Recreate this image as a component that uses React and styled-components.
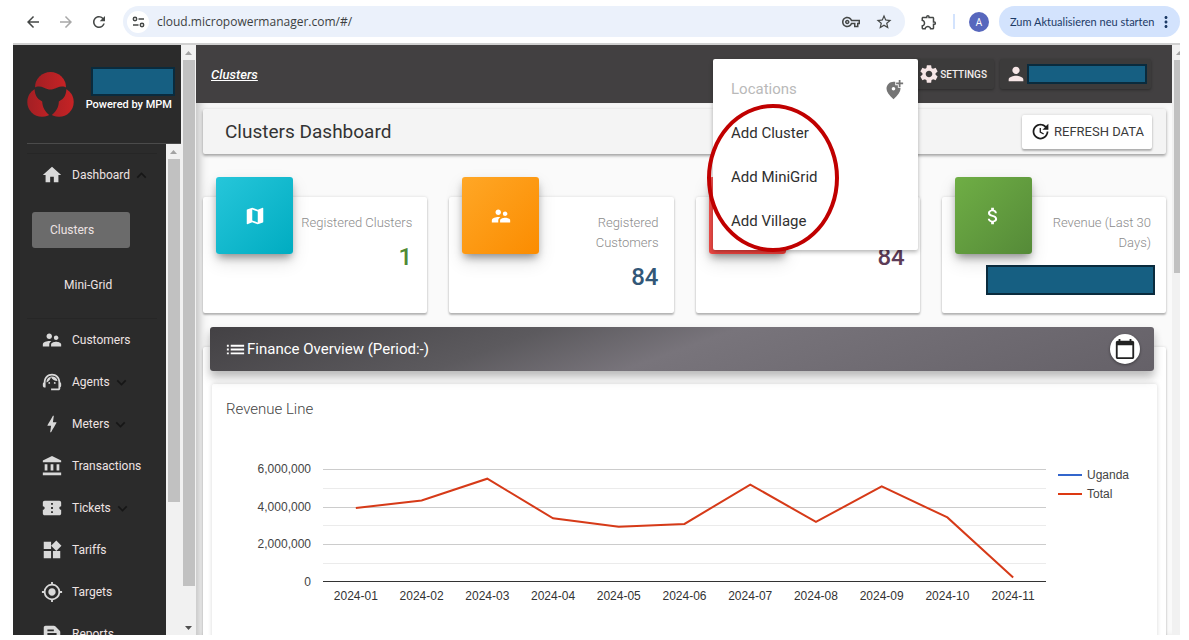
import React from "react";
import styled, { createGlobalStyle, css } from "styled-components";
import {
  MdArrowBack, MdArrowForward, MdRefresh, MdOutlineVpnKey, MdStarBorder, MdOutlineExtension,
  MdMoreVert, MdHome, MdSupervisorAccount, MdSupportAgent, MdBolt, MdAccountBalance,
  MdConfirmationNumber, MdWidgets, MdMyLocation, MdTextSnippet, MdMap, MdAttachMoney, MdList,
  MdCalendarToday, MdUpdate, MdSettings, MdPerson, MdAddLocationAlt,
  MdKeyboardArrowDown, MdKeyboardArrowUp,
} from "react-icons/md";

const GlobalStyle = createGlobalStyle`
  *, *::before, *::after { box-sizing: border-box; }
  body { margin: 0; background: #fff; overflow: hidden; font-family: Roboto, sans-serif; }
  button { font: inherit; color: inherit; border: 0; padding: 0; background: none; cursor: pointer; }
  a { color: inherit; text-decoration: none; }
  h1, h2, h3, p, ul { margin: 0; padding: 0; font-weight: 400; }
  ul { list-style: none; }
  svg { display: block; flex: none; }
`;

/* ---------- window ---------- */
const Window = styled.div`
  height: 100vh;
  padding: 0 9px 5px 13px;
  display: flex;
  flex-direction: column;
`;

const BrowserBar = styled.header`
  flex: none;
  height: 45px;
  padding: 0 0 0 11px;
  display: flex;
  align-items: center;
  border-bottom: 2px solid #d0d0d0;
  font-family: "Open Sans", sans-serif;
  color: #444746;
`;

const BrowserButton = styled.button`
  width: 33px;
  height: 30px;
  display: flex;
  align-items: center;
  justify-content: ${(p) => p.$align || "flex-start"};
  color: ${(p) => (p.$dim ? "#a8a8a8" : "inherit")};
`;

const NavButtons = styled.nav`
  display: flex;
  flex: none;
`;

const AddressBar = styled.div`
  flex: 1;
  height: 31px;
  padding: 0 5px 0 4px;
  display: flex;
  align-items: center;
  border-radius: 16px;
  background: #ebf1fb;
`;

const SiteInfo = styled.button`
  width: 22px;
  height: 22px;
  flex: none;
  display: grid;
  place-items: center;
  border-radius: 50%;
  background: #fff;
`;

const UrlInput = styled.input`
  flex: 1;
  min-width: 0;
  padding: 0 8px;
  border: 0;
  outline: 0;
  background: none;
  font: 12px "Open Sans", sans-serif;
  color: #3c3f42;
`;

const BarDivider = styled.span`
  width: 2px;
  height: 15px;
  margin: 0 14px 0 15px;
  background: #d3e3fd;
`;

const Avatar = styled.button`
  width: 20px;
  height: 20px;
  flex: none;
  border-radius: 50%;
  background: #5767bd;
  color: #fff;
  font-size: 10px;
`;

const UpdateButton = styled.button`
  flex: none;
  height: 31px;
  width: 181px;
  margin-left: 10px;
  padding: 0 5px 0 11px;
  display: flex;
  align-items: center;
  justify-content: space-between;
  border-radius: 16px;
  background: #d3e3fd;
  color: #1c3a66;
  font-family: Lato, sans-serif;
  font-size: 11px;
  white-space: nowrap;
`;

/* ---------- scroll bars ---------- */
const Track = styled.div`
  flex: none;
  width: ${(p) => p.$width}px;
  overflow: hidden;
  display: flex;
  flex-direction: column;
  align-items: flex-start;
  background: #f1f1f1;
`;

const TrackButton = styled.span`
  flex: none;
  width: 15px;
  height: 15px;
  display: grid;
  place-items: center;
  color: ${(p) => p.$color};
`;

const Rail = styled.div`
  flex: 1;
  width: 100%;
  padding-left: 2px;
`;

const Thumb = styled.div`
  width: 12px;
  height: ${(p) => p.$size}%;
  background: #c1c1c1;
`;

function ScrollBar({ width = 15, size, down = true }) {
  return (
    <Track $width={width} aria-hidden="true">
      <TrackButton $color="#a3a3a3">
        <svg width="7" height="4" viewBox="0 0 7 4"><path d="M0 4 3.5 0 7 4z" fill="currentColor" /></svg>
      </TrackButton>
      <Rail><Thumb $size={size} /></Rail>
      {down && (
        <TrackButton $color="#505050">
          <svg width="7" height="4" viewBox="0 0 7 4"><path d="M0 0 3.5 4 7 0z" fill="currentColor" /></svg>
        </TrackButton>
      )}
    </Track>
  );
}

/* ---------- application shell ---------- */
const Shell = styled.div`
  flex: 1;
  min-height: 0;
  display: flex;
`;

const Sidebar = styled.aside`
  flex: none;
  width: 168px;
  display: flex;
  flex-direction: column;
  background: #2b2b2b;
  color: #eeeaea;
`;

const Brand = styled.div`
  flex: none;
  height: 99px;
  margin-left: 14px;
  padding: 22px 6px 0 0;
  display: flex;
  justify-content: space-between;
  border-bottom: 1px solid #4b4b4b;
`;

const BrandText = styled.div`
  display: flex;
  flex-direction: column;
  align-items: flex-end;
  gap: 2px;
`;

const Tagline = styled.p`
  padding-right: 3px;
  font-size: 11px;
  line-height: 14px;
  white-space: nowrap;
  color: #fff;
  && { font-weight: 500; }
`;

const Masked = styled.span`
  display: block;
  flex: none;
  width: ${(p) => p.$width}px;
  height: ${(p) => p.$height}px;
  border: 2px solid #0a2b3d;
  background: #165f82;
`;

const LogoBox = styled.div`
  padding-top: 5px;
`;

const SideBody = styled.div`
  flex: 1;
  min-height: 0;
  display: flex;
`;

const SideNav = styled.nav`
  flex: 1;
  min-width: 0;
  overflow: hidden;
  padding: 9px 9px 0 14px;
  font-size: 12px;
  font-weight: 500;
`;

const NavGroup = styled.ul`
  border-top: 1px solid #262626;
`;

const NavItem = styled.a`
  height: 42px;
  padding-left: 14px;
  display: flex;
  align-items: center;
  gap: 9px;
  color: #eee3e3;
  svg:first-child { color: #d9d9d9; }
`;

const Caret = styled.span`
  margin-left: -7px;
  svg:first-child { color: #161616; }
`;

const SubItem = styled.a`
  display: flex;
  align-items: center;
  height: 36px;
  margin: ${(p) => (p.$active ? "16px 27px 0 5px" : "19px 0 15px 19px")};
  padding-left: 18px;
  border-radius: 3px;
  color: #eee3e3;
  ${(p) => p.$active && css`background: #6b6b6b;`}
`;

/* ---------- main column ---------- */
const Main = styled.div`
  position: relative;
  flex: 1;
  min-width: 0;
  display: flex;
  flex-direction: column;
`;

const TopBar = styled.div`
  flex: none;
  height: 58px;
  padding: 0 21px 0 15px;
  display: flex;
  align-items: center;
  justify-content: space-between;
  background: #424041;
  color: #fff;
`;

const Crumb = styled.a`
  font-size: 13px;
  font-weight: 500;
  font-style: italic;
  text-decoration: underline;
`;

const TopActions = styled.div`
  display: flex;
  gap: 6px;
`;

const TopButton = styled.button`
  height: 30px;
  padding: 0 ${(p) => p.$padRight}px 0 5px;
  display: flex;
  align-items: center;
  border-radius: 2px;
  background: #3c3b3b;
  box-shadow: 0 1px 3px rgba(0, 0, 0, 0.35);
  color: #f3eded;
  font-size: 10px;
  font-weight: 500;
  svg { color: #f6e6e6; }
`;

const Content = styled.main`
  flex: 1;
  min-height: 0;
  overflow: hidden;
  padding: 6px 6px 0 7px;
  background: #fafafa;
  box-shadow: inset 8px 0 8px -4px rgba(0, 0, 0, 0.22);
`;

const cardShadow = css`
  background: #fff;
  border-radius: 2px;
  box-shadow: 0 2px 2px rgba(0, 0, 0, 0.25), 0 0 3px rgba(0, 0, 0, 0.14);
`;

const TitleBar = styled.section`
  ${cardShadow}
  height: 45px;
  padding: 0 14px 0 22px;
  display: flex;
  align-items: center;
  justify-content: space-between;
  background: #f4f4f4;
  box-shadow: 0 2px 3px rgba(0, 0, 0, 0.3), 0 0 4px rgba(0, 0, 0, 0.12);
`;

const Title = styled.h1`
  font-size: 19px;
  color: #333;
`;

const RefreshButton = styled.button`
  ${cardShadow}
  height: 34px;
  padding: 0 8px;
  display: flex;
  align-items: center;
  gap: 3px;
  font-size: 13px;
  color: #3b3b3b;
  svg { color: #1d1d1d; }
`;

const Stats = styled.section`
  display: grid;
  grid-template-columns: repeat(4, minmax(0, 1fr));
  gap: 22px;
  margin-top: 43px;
`;

const StatCard = styled.article`
  ${cardShadow}
  height: 116px;
  padding: 0 15px 0 13px;
  display: flex;
  justify-content: space-between;
`;

const StatTile = styled.div`
  flex: none;
  width: 77px;
  height: 77px;
  margin-top: -20px;
  display: grid;
  place-items: center;
  border-radius: 3px;
  background: linear-gradient(135deg, ${(p) => p.$from}, ${(p) => p.$to});
  box-shadow: 0 5px 8px -2px rgba(0, 0, 0, 0.4), 0 8px 18px rgba(0, 0, 0, 0.12);
  color: #fff;
`;

const StatBody = styled.div`
  flex: 1;
  min-width: 0;
  padding-top: 16px;
  display: flex;
  flex-direction: column;
  align-items: flex-end;
`;

const StatLabel = styled.h2`
  max-width: ${(p) => (p.$narrow ? "100px" : "none")};
  min-height: 20px;
  font-size: 13px;
  font-weight: 300;
  line-height: 20px;
  text-align: right;
  color: #8c8c8c;
`;

const StatValue = styled.p`
  margin-top: 10px;
  font-size: 24px;
  line-height: 28px;
  color: ${(p) => p.$color};
  && { font-weight: 500; }
`;

const StatMask = styled.div`
  margin: 12px -4px 0 0;
`;

const Finance = styled.section`
  ${cardShadow}
  margin-top: 34px;
  padding: 0 9px;
  height: 400px;
`;

const FinanceHead = styled.header`
  position: relative;
  top: -20px;
  height: 44px;
  margin: 0 3px 0 -2px;
  padding: 0 14px;
  display: flex;
  align-items: center;
  border-radius: 3px;
  background: linear-gradient(160deg, #434144 0%, #5c5a5e 32%, #78747b 50%, #656168 100%);
  box-shadow: 0 5px 9px rgba(0, 0, 0, 0.22), 0 10px 12px rgba(0, 0, 0, 0.08);
  color: #fff;
`;

const FinanceTitle = styled.h2`
  flex: 1;
  font-size: 15px;
`;

const PeriodButton = styled.button`
  width: 30px;
  height: 30px;
  display: grid;
  place-items: center;
  border-radius: 50%;
  background: #fff;
  box-shadow: 0 1px 3px rgba(0, 0, 0, 0.4);
  color: #222;
`;

const ChartCard = styled.div`
  height: 340px;
  margin-top: -7px;
  padding: 15px 14px 0;
  border-radius: 2px;
  background: #fff;
  box-shadow: 0 0 4px rgba(0, 0, 0, 0.16);
`;

const ChartTitle = styled.h3`
  font-size: 15px;
  font-weight: 300;
  line-height: 20px;
  color: #444;
`;

const Chart = styled.div`
  display: grid;
  grid-template-columns: 97px 1fr 97px;
  margin-top: 50px;
  font: 12px/14px "Liberation Sans", sans-serif;
  color: #444;
`;

const YAxis = styled.div`
  height: 127px;
  margin-top: -7px;
  padding-right: 12px;
  display: flex;
  flex-direction: column;
  justify-content: space-between;
  text-align: right;
`;

const Plot = styled.svg`
  width: 100%;
  height: 113px;
  overflow: visible;
`;

const XAxis = styled.div`
  grid-column: 2;
  display: grid;
  grid-template-columns: repeat(${(p) => p.$count}, 1fr);
  text-align: center;
  color: #333;
`;

const Legend = styled.ul`
  display: flex;
  flex-direction: column;
  gap: 5px;
  margin-top: -1px;
  padding-left: 12px;
`;

const LegendItem = styled.li`
  display: flex;
  align-items: center;
  gap: 5px;
  &::before {
    content: "";
    width: 24px;
    height: 2px;
    background: ${(p) => p.$color};
  }
`;

/* ---------- locations menu ---------- */
const Menu = styled.div`
  position: absolute;
  top: 14px;
  right: 254px;
  width: 205px;
  padding: 8px 0 7px;
  border-radius: 2px;
  background: #fff;
  box-shadow: 0 2px 4px rgba(0, 0, 0, 0.3);
  font-size: 15px;
  color: #2f2f2f;
`;

const MenuHead = styled.div`
  height: 44px;
  padding: 0 14px 0 18px;
  display: flex;
  align-items: center;
  justify-content: space-between;
  color: #b9b9b9;
  svg { color: #757575; }
`;

const MenuItem = styled.button`
  display: block;
  width: 100%;
  height: 44px;
  padding-left: 18px;
  text-align: left;
`;

const Ring = styled.span`
  position: absolute;
  top: 45px;
  left: -6px;
  width: 132px;
  height: 148px;
  border: 4px solid #c00000;
  border-radius: 50%;
  pointer-events: none;
`;

function Logo() {
  return (
    <svg width="47" height="45" viewBox="0 0 47 45" role="img" aria-label="MPM">
      <defs>
        <linearGradient id="mpm-red" x1="0" x2="1">
          <stop offset="0" stopColor="#a31f24" />
          <stop offset="1" stopColor="#c62325" />
        </linearGradient>
      </defs>
      <g fill="url(#mpm-red)">
        <circle cx="23.5" cy="15.5" r="15.5" />
        <circle cx="15" cy="30" r="14.7" />
        <circle cx="32" cy="30" r="14.7" />
      </g>
      <path
        d="M8 15.500c2-1.500 6-1.300 9 .2 2.500 1.200 4.500 1.800 6.500 1.800s4-.6 6.500-1.800c3-1.500 7-1.700 9-.2.8 1.500.3 5-1.200 8.500-1.300 2.600-3.500 4-6 5.500 0 6-3 10.500-8.300 14.500-5.300-4-8-8.500-8.300-14.500-2.500-1.500-4.700-2.900-6-5.500C7.700 20.500 7.200 17 8 15.500z"
        fill="#2b2b2b"
      />
    </svg>
  );
}

function TuneIcon() {
  return (
    <svg width="13" height="12" viewBox="0 0 13 12" fill="none" stroke="#444746" strokeWidth="1.5">
      <circle cx="3" cy="3" r="1.7" />
      <path d="M6.500 3H12M1 9h5.500" />
      <circle cx="10" cy="9" r="1.7" />
    </svg>
  );
}

const navItems = [
  { label: "Customers", icon: MdSupervisorAccount },
  { label: "Agents", icon: MdSupportAgent, caret: true },
  { label: "Meters", icon: MdBolt, caret: true },
  { label: "Transactions", icon: MdAccountBalance },
  { label: "Tickets", icon: MdConfirmationNumber, caret: true },
  { label: "Tariffs", icon: MdWidgets },
  { label: "Targets", icon: MdMyLocation },
  { label: "Reports", icon: MdTextSnippet },
];

const stats = [
  { label: "Registered Clusters", value: "1", color: "#4f8a34", from: "#26c6da", to: "#00acc1", icon: MdMap },
  { label: "Registered Customers", narrow: true, value: "84", color: "#325777", from: "#ffa726", to: "#fb8c00", icon: MdSupervisorAccount },
  { label: "", value: "84", color: "#5d3c57", from: "#ef5350", to: "#e53935" },
  { label: "Revenue (Last 30 Days)", narrow: true, masked: true, from: "#6fae45", to: "#558a38", icon: MdAttachMoney },
];

const revenue = [
  ["2024-01", 3.92], ["2024-02", 4.32], ["2024-03", 5.48], ["2024-04", 3.37],
  ["2024-05", 2.92], ["2024-06", 3.07], ["2024-07", 5.17], ["2024-08", 3.18],
  ["2024-09", 5.07], ["2024-10", 3.42], ["2024-11", 0.21],
];

function RevenueChart() {
  const step = 720 / revenue.length;
  const points = revenue
    .map(([, v], i) => `${(step * (i + 0.5)).toFixed(1)},${(112.5 - v * 18.75).toFixed(1)}`)
    .join(" ");
  return (
    <Chart>
      <YAxis>
        <span>6,000,000</span><span>4,000,000</span><span>2,000,000</span><span>0</span>
      </YAxis>
      <Plot viewBox="0 0 720 113" preserveAspectRatio="none" role="img" aria-label="Revenue by month">
        {[0, 1, 2, 3, 4, 5].map((n) => (
          <rect key={n} x="0" y={Math.round(n * 18.75)} width="720" height="1" fill={n % 2 ? "#ebebeb" : "#ccc"} />
        ))}
        <rect x="0" y="112" width="720" height="1" fill="#333" />
        <polyline points={points} fill="none" stroke="#d63a18" strokeWidth="2" vectorEffect="non-scaling-stroke" />
      </Plot>
      <Legend>
        <LegendItem $color="#3366cc">Uganda</LegendItem>
        <LegendItem $color="#dc3912">Total</LegendItem>
      </Legend>
      <XAxis $count={revenue.length}>
        {revenue.map(([month]) => <span key={month}>{month}</span>)}
      </XAxis>
    </Chart>
  );
}

export default function App() {
  return (
    <Window>
      <GlobalStyle />
      <BrowserBar>
        <NavButtons>
          <BrowserButton aria-label="Back"><MdArrowBack size={18} /></BrowserButton>
          <BrowserButton aria-label="Forward" $dim><MdArrowForward size={18} /></BrowserButton>
          <BrowserButton aria-label="Reload"><MdRefresh size={18} /></BrowserButton>
        </NavButtons>
        <AddressBar>
          <SiteInfo aria-label="Site information"><TuneIcon /></SiteInfo>
          <UrlInput aria-label="Address" defaultValue="cloud.micropowermanager.com/#/" />
          <BrowserButton aria-label="Passwords" $align="center"><MdOutlineVpnKey size={18} /></BrowserButton>
          <BrowserButton aria-label="Bookmark" $align="center"><MdStarBorder size={18} /></BrowserButton>
        </AddressBar>
        <BrowserButton aria-label="Extensions" $align="flex-end"><MdOutlineExtension size={18} /></BrowserButton>
        <BarDivider />
        <Avatar>A</Avatar>
        <UpdateButton>Zum Aktualisieren neu starten<MdMoreVert size={18} /></UpdateButton>
      </BrowserBar>

      <Shell>
        <Sidebar>
          <Brand>
            <LogoBox><Logo /></LogoBox>
            <BrandText>
              <Masked $width={84} $height={29} />
              <Tagline>Powered by MPM</Tagline>
            </BrandText>
          </Brand>
          <SideBody>
            <SideNav>
              <NavGroup>
                <li>
                  <NavItem href="#/"><MdHome size={22} />Dashboard<Caret><MdKeyboardArrowUp size={19} /></Caret></NavItem>
                </li>
                <li><SubItem href="#/clusters" $active>Clusters</SubItem></li>
                <li><SubItem href="#/mini-grid">Mini-Grid</SubItem></li>
              </NavGroup>
              <NavGroup>
                {navItems.map(({ label, icon: Icon, caret }) => (
                  <li key={label}>
                    <NavItem href={`#/${label.toLowerCase()}`}>
                      <Icon size={22} />{label}
                      {caret && <Caret><MdKeyboardArrowDown size={19} /></Caret>}
                    </NavItem>
                  </li>
                ))}
              </NavGroup>
            </SideNav>
            <ScrollBar size={72} down={false} />
          </SideBody>
        </Sidebar>
        <ScrollBar size={94} />

        <Main>
          <TopBar>
            <Crumb href="#/clusters">Clusters</Crumb>
            <TopActions>
              <TopButton $padRight={7}><MdSettings size={22} />SETTINGS</TopButton>
              <TopButton $padRight={4} aria-label="Account"><MdPerson size={22} /><Masked $width={120} $height={20} /></TopButton>
            </TopActions>
          </TopBar>
          <Content>
            <TitleBar>
              <Title>Clusters Dashboard</Title>
              <RefreshButton><MdUpdate size={21} />REFRESH DATA</RefreshButton>
            </TitleBar>
            <Stats>
              {stats.map(({ label, narrow, value, color, from, to, icon: Icon, masked }, i) => (
                <StatCard key={i}>
                  <StatTile $from={from} $to={to}>{Icon && <Icon size={22} />}</StatTile>
                  <StatBody>
                    <StatLabel $narrow={narrow}>{label}</StatLabel>
                    {masked
                      ? <StatMask><Masked $width={169} $height={30} /></StatMask>
                      : <StatValue $color={color}>{value}</StatValue>}
                  </StatBody>
                </StatCard>
              ))}
            </Stats>
            <Finance>
              <FinanceHead>
                <MdList size={23} />
                <FinanceTitle>Finance Overview (Period:-)</FinanceTitle>
                <PeriodButton aria-label="Select period"><MdCalendarToday size={22} /></PeriodButton>
              </FinanceHead>
              <ChartCard>
                <ChartTitle>Revenue Line</ChartTitle>
                <RevenueChart />
              </ChartCard>
            </Finance>
          </Content>
          <Menu>
            <MenuHead>Locations<MdAddLocationAlt size={21} /></MenuHead>
            <MenuItem>Add Cluster</MenuItem>
            <MenuItem>Add MiniGrid</MenuItem>
            <MenuItem>Add Village</MenuItem>
            <Ring />
          </Menu>
        </Main>
        <ScrollBar width={8} size={37} down={false} />
      </Shell>
    </Window>
  );
}
